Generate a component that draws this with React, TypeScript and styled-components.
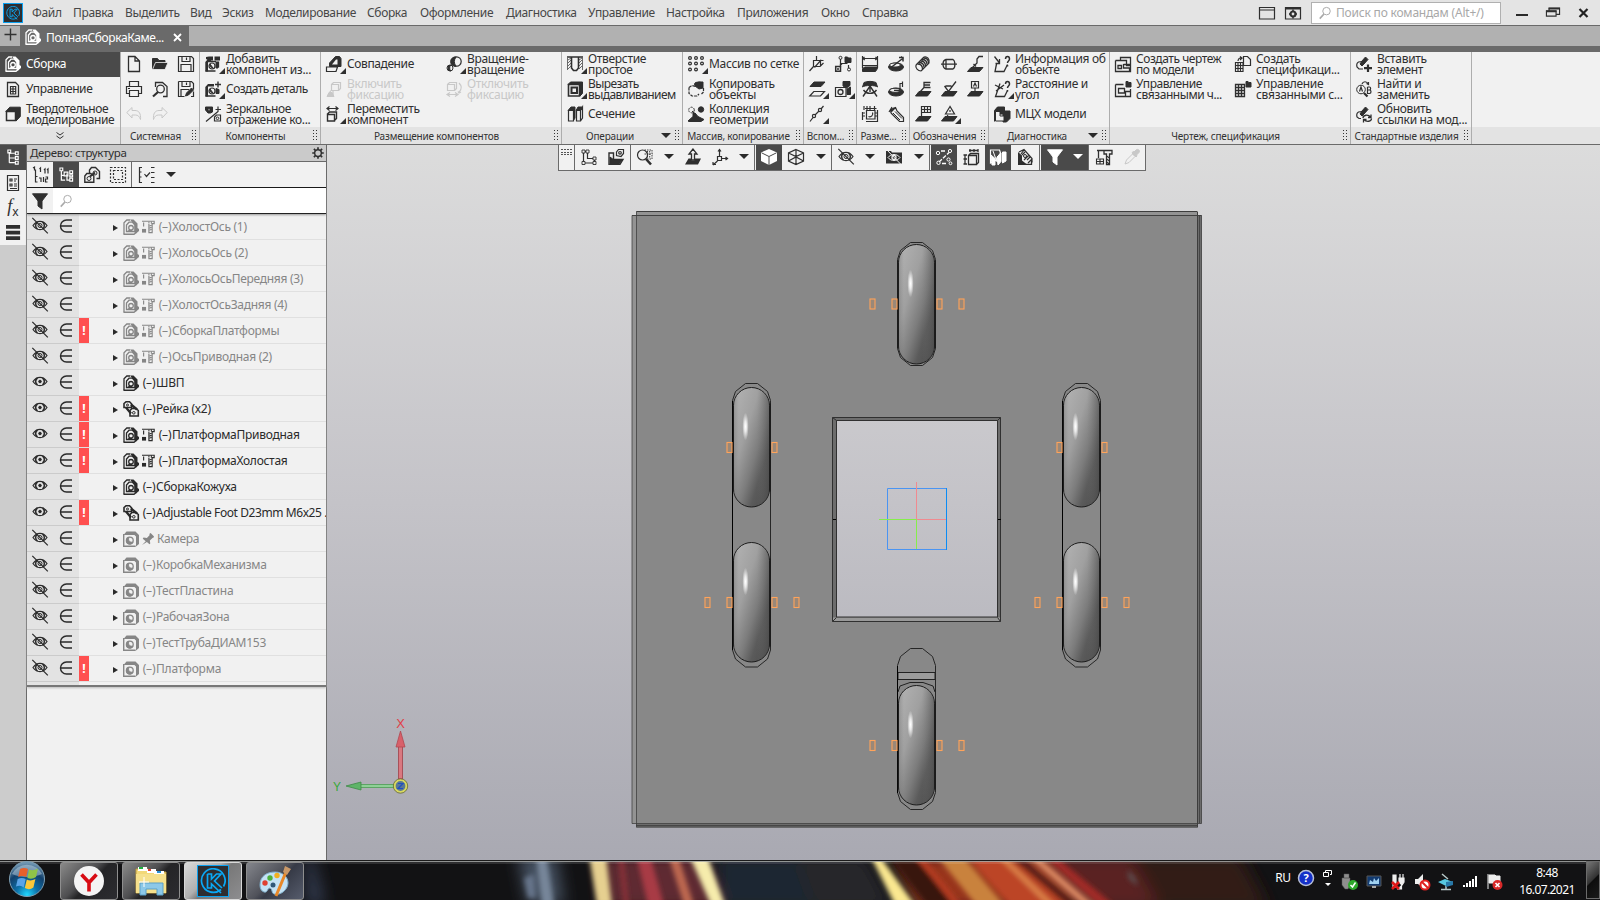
import React from "react";
import styled, { createGlobalStyle, css } from "styled-components";

const Global = createGlobalStyle`
  html, body { margin: 0; padding: 0; }
  body { width: 1600px; height: 900px; overflow: hidden; font-family: "Noto Sans", "Open Sans", sans-serif; font-size: 12px; color: #2f2f2f; }
  * { box-sizing: border-box; }
`;

/* ---------- icons: 16×16 grid ---------- */
const F = "currentColor";
const icons: Record<string, React.ReactNode> = {
  asm: <><path d="M1 15.300V3.800L3.800 1H7" strokeWidth="1.300" /><path d="M3.500 12.500V6L6 3.200h3.500L12 6v6.500z" strokeWidth="1.300" /><path d="M7 .5h3.500l4 4v4.500l1.500 1v2l-3 2.500-1.500-1V6L9 3z" fill={F} stroke="none" /><path d="M.5 15.300h10.500l2.500-2" strokeWidth="1.400" /><circle cx="8" cy="8.800" r="2.300" strokeWidth="1.300" /><path d="M5.500 11a3.500 3.500 0 0 0 3.500 .3" strokeWidth="1.800" /></>,
  sheet: <><path d="M2.500 1.500h8l3 3v11h-11z" strokeWidth="1.300" /><path d="M5 5.500h6M5 8h6M5 10.500h6M5 13h6M5.500 5v8.500M8 5v8.500M10.700 5v8.500" strokeWidth="1.200" /></>,
  solid: <><path d="M1.500 5.500h9v9h-9z" strokeWidth="1.500" /><path d="M.8 5.500l4-4.300h10.500v9.300l-4.300 4.500V5.500z" fill={F} /></>,
  file: <path d="M2.500 .5h6.500l4.500 4.500v10.500h-11z M9 .5V5h4.500" strokeWidth="1.300" />,
  folder: <><path d="M.5 13V2.500h5l1.500 2h6v2" fill={F} /><path d="M3.500 6.500H16l-3 7H.5z" fill={F} stroke="#f1f1f1" strokeWidth=".8" /></>,
  save: <><path d="M.5 .5h13l2 2v13H.5z" strokeWidth="1.200" /><path d="M4 .5v5h8v-5M8.500 1.500v2.500M3 15.500V8.500h10v7" strokeWidth="1.200" /></>,
  print: <><path d="M3.500 5V.5h9V5M3.500 12.500h-3v-7h15v7h-3M3.500 9.500h9v6h-9zM2 7.500h2" strokeWidth="1.200" /></>,
  preview: <><path d="M3.500 6V1.500h7l4.500 4v10h-4" strokeWidth="1.300" /><circle cx="8.500" cy="8" r="3.800" strokeWidth="1.300" /><path d="M6 11L1 15.500" strokeWidth="2.200" /></>,
  saveas: <><path d="M.5 .5h13l2 2v6M.5 .5v15h6M4 .5v5h8v-5M8.500 1.500v2.500M3 15V8.500h8M13 15.500h2.500v-5" strokeWidth="1.200" /><path d="M7.500 15l1-3 5-5 2 2-5 5z" fill={F} /></>,
  undo: <path d="M.8 6.500L6 1.500v3h3c4 0 6 3 5.500 9-1-3-2.500-4.500-5-4.500H6v3z" />,
  redo: <path d="M15.200 6.500L10 1.500v3H7c-4 0-6 3-5.500 9 1-3 2.500-4.500 5-4.500H10v3z" />,
  addcomp: <><path d="M.3 15.500V6L3 3h3v3H3v9.500zM1 3V1l3-.5h4v4H4zM9.500 .5H15v4H9.500z" fill={F} stroke="none" /><path d="M.5 15h10M3 5.500h8M13.500 5.500v6" strokeWidth="1.300" /><circle cx="7" cy="10" r="3" strokeWidth="1.200" /><path d="M5 8l3 4a3 3 0 0 1-3-4zM11 6h2v6h-2z" fill={F} /></>,
  newpart: <><path d="M.3 15.500V6L3 3h6v2.500H3v10z" fill={F} stroke="none" /><path d="M.5 15h10M13 .5v6M10 3.500h6" strokeWidth="1.400" /><circle cx="7" cy="10" r="3" strokeWidth="1.200" /><path d="M5 8l3 4a3 3 0 0 1-3-4zM11 7.500l3 1v4h-3z" fill={F} /></>,
  mirror: <><path d="M.5 1h7v5l-2 1H3L.5 4z" fill={F} /><path d="M3 2.800h2v2H3z" fill="#fff" /><path d="M1 15.500L13 5.500M9.500 15v-4l2-2h4v6zM13 6V.5M10.500 3.500h5.500" strokeWidth="1.200" /><circle cx="12.500" cy="12.300" r="1.300" /></>,
  coincide: <><path d="M3.500 10.500V7l6-6.500h4l1.500 2v8h-11z" fill={F} /><path d="M6 8.500l4-5h1.500v5z" fill="#f1f1f1" stroke="none" /><path d="M.5 15.500V11h11l-1.500 4.500z" fill="#f1f1f1" strokeWidth="1.200" /></>,
  rotate: <><circle cx="10.500" cy="5.500" r="4.700" strokeWidth="1.200" /><path d="M10 1a4.700 4.700 0 1 0 0 9.300 8 8 0 0 1 0-9.300zM5 9a3 3 0 1 0 0 6 4 4 0 0 1 0-6z" fill={F} /><circle cx="4" cy="12" r="3" /></>,
  fix: <><path d="M5.500 3.500h7v6h-7zM5.500 3.500l2-2h7v6l-2 2M7 9.500v3M3.500 11.500L5 9.500" strokeWidth="1.200" /><path d="M1 15.500l2-4h3l2 4zM2 13h6" fill={F} /></>,
  unfix: <><path d="M1.500 3.500h7v6h-7zM1.500 3.500l2-2h7v6l-2 2M2 13.500h9M4 11.500l-3 2 3 2M9 11.500l3 2-3 2M13 2c3 3 3 6 0 9M12 10.500l1 1.500 2-1" strokeWidth="1.200" /></>,
  move: <><path d="M1 2.500h11M3.500 .5l-2.500 2 2.500 2M9.500 .5l2.500 2-2.500 2" strokeWidth="1.200" /><path d="M1.500 8.500h7v6.500h-7zM1 8.500l2.500-2.500h7v6.500l-2.500 2.500" strokeWidth="1.400" /></>,
  hole: <><path d="M0 1h16M4.500 1.500v10.500l2 2.500h3l2-2.500v-10.500" strokeWidth="1.600" /><path d="M1 4l3-2M1 7l3-3M1 10l3-3M1 13l3-3M12 4l3-2M12 7l3-3M12 10l3-3M12 13l3-3M.5 2v12M15.500 2v12" strokeWidth=".7" /></>,
  cut: <><path d="M1.500 3.500h11v11.500h-11z" strokeWidth="1.600" /><path d="M1 3.500L3.500 1H15.500v11.500l-2.500 2.500V3.500z" fill={F} /><path d="M4.500 6.500h5.500v5.500h-5.500z" strokeWidth="2" /></>,
  section: <><path d="M1.500 4.500h5v10.500h-5zM9.500 4.500h4v10.500h-4zM13.500 15l2-3v-11l-2 3.500" strokeWidth="1.200" /><path d="M1 4.500l3-3.500h4v11L6.500 14.500V4.500zM9 4.500l2-3.500h4l-1.500 3.500z" fill={F} /></>,
  grid: <>{[2, 8, 14].flatMap((x) => [2, 7.5, 13.5].map((y) => (x === 14 && y === 13.5 ? null : <circle key={x + "-" + y} cx={x} cy={y} r="1.400" strokeWidth="1.200" />)))}</>,
  copy: <><path d="M7 3l4-2h4v6l-4 1-4-3z" fill={F} /><path d="M1 6.500l3-2 4 1M1 6.500v6l3 2.500h5l2-2M15.500 7v4l-2 2" strokeDasharray="3 1" strokeWidth="1.200" /><ellipse cx="10.500" cy="3" rx="4" ry="2" fill={F} /></>,
  collect: <><circle cx="3.500" cy="4" r="2.800" strokeDasharray="2 1" /><circle cx="13" cy="3.500" r="2.700" fill={F} /><path d="M0 15l5-4.500V7h2l3 3.500 6 3-3 2H1z" fill={F} /><path d="M4 5l3 3" /></>,
  planeaux: <><path d="M4.500 10.500V4.500h7M4.500 10.500L.5 15M4.500 10.500h6.500L14.500 7M7.500 0v5M5.500 11.500l6-7v6M14.500 4.500h-3" strokeWidth="1.200" /></>,
  treeaux: <><path d="M5.500 3v8M5.500 7.500h7M13.500 9v3" strokeWidth="1.200" /><circle cx="5.500" cy="1.800" r="1.500" /><circle cx="14" cy="13.500" r="1.500" /><path d="M10 1h2.500l1 1H16v4.500h-6z" fill={F} /><path d="M.7 10.500h4.800v4.800H.7z" strokeWidth="1.500" /><path d="M2 13h2M7 7.500l-2 2" strokeWidth="1.500" /></>,
  planes: <><path d="M1 5.500L5 1h11l-4 4.500z" fill={F} /><path d="M.8 15l4-4.500H15.500L11.500 15z" strokeWidth="1.200" /></>,
  camera: <><path d="M.5 6.500h10.500v9H.5z" strokeWidth="1.200" /><circle cx="5.500" cy="11" r="2.500" strokeWidth="1.300" /><path d="M8 .5h7v4l-3.500 2.500L8 5zM12 8l3.500-2v7.500H12z" fill={F} /></>,
  line: <><path d="M1 15.500l3-4M6 9l4-4M12 3l2.500-3" strokeWidth="1.200" /><circle cx="5" cy="10" r="1.600" strokeWidth="1.200" /><circle cx="11" cy="4" r="1.600" strokeWidth="1.200" /></>,
  dimlin: <><path d="M.5 0v12M15.500 0v12M.5 2.500h15M2.500 1L.8 2.500l2 1.500M13.500 1l1.700 1.500-2 1.500M1 9.500h14" strokeWidth="1.200" /><path d="M.5 12.500L3 11h12.500v1.500L13.500 15.500H.5z" fill={F} /></>,
  dimrad: <><ellipse cx="8" cy="11" rx="7.500" ry="4" fill={F} /><ellipse cx="7" cy="9" rx="5.500" ry="2" fill="#f1f1f1" /><path d="M3 11.500L14 3M13 .5l2.500 2.500M11 1.500h4v4" strokeWidth="1.500" /></>,
  dimang: <><path d="M2 1.500c3-1.500 9-1.500 12 0l1.500 4.500c-2-2-13-2-15 0z" fill={F} /><path d="M1 15.500L8 5l7 10.500M1.500 9c3 4.500 10 4.500 13 0M8 5v6" strokeWidth="1.400" /></>,
  dimdia: <><ellipse cx="8" cy="11" rx="7.500" ry="4" fill={F} /><ellipse cx="7" cy="9.300" rx="5.500" ry="2" fill="#f1f1f1" /><path d="M6 9.300h6V2.500h3M14.500 .5v5.500" strokeWidth="1.200" /></>,
  dimbox: <><path d="M4.500 4.500h8.500v8.500h-8.500zM.5 6v8M14.500 2.500H3M2 0v4M5 0v4M8 0v4M12.500 0v4M0 7h3M0 10h3M4 15.500h11.500V4M16 7h-3M16 10h-3M6.500 10.500a3 3 0 0 0 4-4" strokeWidth="1.200" /></>,
  dimsl: <><path d="M3.500 5.500l4-4M1 6l3-5M7.500 1.500c-5 1-6 5-3 7l7 7h4v-4L9 5z" strokeWidth="1.200" /><path d="M5 7l7 7M7 5.500l7 7" /></>,
  thread: <><path d="M1 9l8-8M6 15l8-8M9 1c3-1 6 2 5 6M1 9c-1 3 2 6 5 6" strokeWidth="1.200" /><path d="M2.500 8c3 0 5 2 5 5M4 6.500c3 0 5 2 5 5M5.500 5c3 0 5 2 5 5M7 3.500c3 0 5 2 5 5M8.500 2c3 0 5 2 5 5" strokeWidth="1.300" /></>,
  cyl: <><path d="M5 3.500h7c2 1 3 8 0 9.500H5M5 3.500c-4 1-4 8.500 0 9.500zM0 8.200h16" strokeWidth="1.300" /></>,
  lead: <><path d="M.5 15.500L4 11.500h12l-3.500 4z" fill={F} /><path d="M5 12l5-5V3L12 .5h4M6.500 8l2.500 2.500" strokeWidth="1.300" /></>,
  base1: <><path d="M.5 15L4 10.500h12L12.500 15z" fill={F} /><path d="M5 11l4-4.500V1.500h6.500M9 4h6M9 6.500h6.500" strokeWidth="1.300" /></>,
  rough: <><path d="M.5 15L4 10.500h12L12.500 15z" fill={F} /><path d="M3.500 5l4 5.500L15 .5M4.500 5h6" strokeWidth="1.300" /></>,
  baseA: <><path d="M.5 15L4 10.500h12L12.500 15z" fill={F} /><path d="M4.500 .5h7v6.500h-7zM8 7v4M6.500 5.500L8 2l1.500 3.500" strokeWidth="1.200" /></>,
  table: <><path d="M.5 15L4 10.500h12L12.500 15z" fill={F} /><path d="M6.500 .5h9v6h-9zM6.500 3.500h9M9.500 .5v6M12.500 .5v6M6.500 7v5" strokeWidth="1.200" /></>,
  tri: <><path d="M.5 15L4 10.500h12L12.500 15z" fill={F} /><path d="M9 .5L4.500 8h9zM9 4v2M7 9l-2 3" strokeWidth="1.200" /></>,
  info: <><path d="M.5 .5l5 6.500M5.500 3v4.500H1.500M2.500 8L1 15.500h9l3.500-7" strokeWidth="1.300" /><path d="M11.500 3c0-3.500 4-3.500 4 0 0 2-2 2-2 4M13.500 9v1.500" strokeWidth="1.500" /></>,
  dist: <><path d="M1 4l8 4M6 2.500L1.500 15.500h9l3-6M2 10l8-6" strokeWidth="1.300" /><path d="M11.500 3c0-3.500 4-3.500 4 0 0 2-2 2-2 4M13.500 9v1.500" strokeWidth="1.500" /></>,
  mass: <><path d="M.5 15.500V4.500l3-3.500h7v4h5.500v7.500l-3.500 3.500H9v-8H4" fill={F} /><path d="M1.500 5.500h4.500v4.500h4v5h-8.500z" fill="#f1f1f1" /></>,
  drawing: <><path d="M.5 4.500h6M.5 4.500v11h15v-8M5.500 4V1.500h10v8h-4v-5h-6M8.500 8.500h7M8.500 8v4h6v3M3 9.500h3.500v3H3z" strokeWidth="1.300" /></>,
  managedr: <><path d="M.5 3.500h8M.5 3.500v12h15V8M3.500 7.500h6v4.500h-6zM10.500 15v-4.500h5" strokeWidth="1.300" /><path d="M11 .5h2l1 1h2v4.500h-5z" fill={F} /></>,
  spec: <><path d="M.5 6.500h7.500v9h-7.500zM.5 9.500h7.500M.5 12.500h7.500M3 6.500v9M5.500 6.500v9M8.500 9.500V.5h4l3 3V9.500h-7M3 5c0-4 4-3 4-3M5 .5l2 1.500-2 2" strokeWidth="1.200" /></>,
  managesp: <><path d="M.5 3.500h9v12h-9zM.5 6.500h9M.5 9.500h9M.5 12.500h9M3.500 3.500v12M6.500 3.500v12" strokeWidth="1.300" /><path d="M11 .5h2l1 1h2v4.500h-5z" fill={F} /></>,
  stdadd: <><path d="M6 5.500L2.500 6C.5 7 .5 9 1 11l2 2h4" strokeWidth="1.200" /><path d="M5.500 5.500L9.500 1l2.500 2.500-4 4.500zM4 8l2-3 3 2-3 3z" fill={F} /><path d="M12 8.500v7.500M8 12.200h8" strokeWidth="2.200" /></>,
  stdfind: <><circle cx="5" cy="8.500" r="4.300" /><path d="M8 12l3.500 3.500" strokeWidth="2.200" /><path d="M3.500 10.500L5 6l1.500 4.500M11.500 6v6.500h2c2 0 2-3.500 0-3.500h-2M13.500 9c1.500 0 1.500-3 0-3h-2M6 3c1-3 5-3 6 0M10.500 2.500l2 1V1" strokeWidth="1.200" /></>,
  stdref: <><path d="M6 5.500L2.500 6C.5 7 .5 9 1 11l2 1.500h2" strokeWidth="1.200" /><path d="M5.500 5.500L9.500 1l2.500 2.500-4 4.500zM4 8l2-3 3 2-3 3z" fill={F} /><path d="M7 12c0-3 5-4 7.500-1M15.500 12.500c0 3-5 4-7.500 1M15 8.500v3h-3M7.500 16.500v-3h3" strokeWidth="1.300" /></>,
  treeA: <><path d="M3.500 2v11.500M3.500 3.500h6M3.500 8.500h6M3.500 13.500h6" strokeWidth="1.200" /><path d="M2 0h3v3H2zM10 2h3v3h-3zM10 7h3v3h-3zM10 12h3v3h-3z" strokeWidth="1.200" /></>,
  paramlist: <><path d="M2.500 .5h11v15h-11zM5 4h2v2H5zM5 9h2v2H5zM9 4h3M9 6h2M9 9h3M9 11h3M5 13.500h7" strokeWidth="1.200" /></>,
  bars: <path d="M0 2h15M0 8h15M0 14h15" strokeWidth="4" />,
  numtree: <><path d="M3.500 2.500V15h2M3.500 9.500h2" strokeWidth="1.200" /><path d="M1 1l1.500-1v3.500M7.500 2l1-1v4M12 3l1-1v4.500M15 3l1-1v4.500M7 11h2v4M11.500 10V15M13.500 10h2v2h-2v3h2" strokeWidth="1.200" /></>,
  typetree: <><path d="M2.500 4v10h4M2.500 9h3M8.500 7v7h3" strokeWidth="1.300" /><path d="M1 1h3v3H1zM5.500 5.500h4v4h-4zM11.500 4h3v3h-3zM11.500 8.500h3v2h-3zM11.500 12h3v3h-3z" strokeWidth="1.200" /></>,
  twodocs: <><path d="M5.500 7V3l2-2.500h4l4 4v7h-3M.8 15.300V9l2-2.500h4l3 2.500v6.300z" strokeWidth="1.400" /><circle cx="5" cy="11.500" r="2" /><path d="M6 9.500l5-4" strokeWidth="2" /><circle cx="11" cy="6" r="2" /></>,
  dashed: <path d="M.5 .5h15v15H.5zM3.500 3.500h9v9h-9z" strokeDasharray="2 1.500" strokeWidth="1.200" />,
  checktree: <><path d="M3 .5H.5v15H3M.5 5h2M.5 10h2M5.500 7l2 2.500L11 5.500M12 .5h3.500M12 5.500h3.500M12 10.500h3.500M12 15.500h3.500" strokeWidth="1.200" /></>,
  funnel: <path d="M.5 .8h15L10 8v8l-4-3V8z" fill={F} />,
  gear: <><circle cx="8" cy="8" r="4.500" strokeWidth="2" /><path d="M8 .3v3M8 12.700v3M.3 8h3M12.700 8h3M2.500 2.500l2 2M11.500 11.500l2 2M13.500 2.500l-2 2M4.500 11.500l-2 2" strokeWidth="2.200" /></>,
  search: <><circle cx="10" cy="5.500" r="5" strokeWidth="1.300" /><path d="M6.500 9.500L1 15.500" strokeWidth="2" /></>,
  eye: <><path d="M1 7.500c4-5.500 10-5.500 14 0-4 5.500-10 5.500-14 0z" strokeWidth="1.200" /><path d="M5.500 4a4.200 4.200 0 0 0 0 7M10.500 4a4.200 4.200 0 0 1 0 7" strokeWidth="1.600" /><circle cx="8" cy="7.500" r="1.300" fill={F} /></>,
  eyeoff: <><path d="M1 7.500c4-5.500 10-5.500 14 0-4 5.500-10 5.500-14 0z" strokeWidth="1.200" /><path d="M5.500 4a4.200 4.200 0 0 0 0 7M10.500 4a4.200 4.200 0 0 1 0 7" strokeWidth="1.500" /><circle cx="8" cy="7.500" r="2" /><path d="M.3 -.2l15.500 15.500" strokeWidth="1.200" /></>,
  elem: <path d="M14 2H8.500a6 6 0 0 0 0 12H14M3 8H14" strokeWidth="1.400" />,
  multi: <><path d="M1 6V2.500L3 .8h3.500l2 2v3.700H1zM7 15V9.500l2-2h4l2.300 2V15z" strokeWidth="1.600" /><path d="M3 6.500l5 6M8 3.500l6 5" strokeWidth="2.300" /><circle cx="4.500" cy="4" r="1" /><circle cx="10.800" cy="11.800" r="1.300" /></>,
  part: <><path d="M.7 3v12.300h12" strokeWidth="1.400" /><path d="M.5 4L3.500 .5h9L16 4v9l-3 2.500V5.500L11.500 4z" fill={F} stroke="none" /><circle cx="6.800" cy="9.500" r="3.400" strokeWidth="1.300" /><path d="M6 6.500c-1.500 3 1 5.500 4 4.500a3.400 3.400 0 1 1-4-4.500z" fill={F} /></>,
  std: <><path d="M0 1.500h15v3h-2.500v11h-4V4.500M2 3v5" strokeWidth="1.400" /><path d="M9 7.500l3-1M9 10l3-1M9 12.500l3-1M8.500 2v2M11.500 1.500v3" strokeWidth="1.300" /><path d="M0 11h5v4.500H0z" fill={F} stroke="none" /></>,
  fixpin: <path d="M16 4.500l-4.500-4.500-1.500 1v2L6.500 6.500 2 6l-1 1.500 4 3.500-5 5 6.500-4L10 15l1-1-.5-4L14 6.500l1.500-.5z" fill={F} stroke="none" />,
  sketch: <><path d="M2.500 2.500v11.500h11v-4.500h-7v-7z" strokeWidth="1.200" /><path d="M1 1h3v3H1zM5 1h3v3H5zM12 8h3v3h-3zM1 12.500h3v3H1zM12 12.500h3v3h-3z" fill="#f1f1f1" strokeWidth=".9" /></>,
  sketch3d: <><path d="M1 15.300V4h4.500v6.500h9.500L12 15.300z" strokeWidth="1.400" /><path d="M2 14.500V8l4 3h8l-2.500 3.500z" fill={F} /><path d="M8.500 6.500v-3.500l2-2.500h5v4l-2.500 3z" strokeWidth="1.200" /><circle cx="12" cy="3.800" r="1.300" strokeWidth="1.200" /></>,
  zoomarea: <><circle cx="5.500" cy="6" r="5" strokeWidth="1.200" /><path d="M9 10l5 5.500" strokeWidth="2.600" /><path d="M7.500 1h7.500v9h-5M10.500 2v7M12.700 2v7M7.500 5h8" strokeDasharray="1.500 1" strokeWidth=".9" /></>,
  normal: <><path d="M8 0L4 5h2.500v6h3V5H12z" fill="#f1f1f1" strokeWidth="1.300" /><path d="M0 15.500L3.500 9.500h3v2h3v-2H16L13 15.500z" fill={F} stroke="none" /></>,
  axes: <><path d="M5.500 7.500h4v4h-4zM7.500 7V0M10 9.500h5.500M5.500 12L1 16M6 2.500L7.500 .5 9 2.500M13.500 8l2 1.500-2 1.500M1 13v2.500h3" strokeWidth="1.200" /></>,
  shaded: <><path d="M8 0l8 3.500v8.500l-8 4-8-4V3.500z" fill="#fff" stroke="none" /><path d="M.5 3.800L8 7.500l7.500-3.700M8 7.500V16" stroke="#4a4a4a" /></>,
  wire: <><path d="M8 .5l7.500 3.500v8L8 15.500.5 12V4zM.5 4l7.500 3.500L15.500 4M8 7.500v8M.5 12l7.500-4 7.500 4M8 .5v7" strokeWidth="1.200" /></>,
  eyebox: <><path d="M0 2h5l1 1.500h10V14.500H0z" fill={F} stroke="none" /><path d="M2 8.500c3-4 9-4 12 0-3 4-9 4-12 0z" stroke="#f1f1f1" fill="none" /><circle cx="8" cy="8.500" r="2" stroke="#f1f1f1" strokeWidth="1.300" /><path d="M0 0l15 15.500" stroke="#f1f1f1" strokeWidth="1" /></>,
  snaps: <><path d="M3 13L13 3.500M5 2h5M6 14.500h5" strokeWidth="1.300" strokeDasharray="4 1.500" /><circle cx="2" cy="4" r="1.700" /><circle cx="14" cy="2" r="1.600" /><circle cx="12.500" cy="10.500" r="1.600" /><circle cx="14.500" cy="14.300" r="1.400" /><circle cx="2.500" cy="13.800" r="1.700" /></>,
  dims3: <><path d="M5.500 6.500h8v9h-8zM5.500 6.500l2-2h8v9l-2 2M6 1.500h9.500M7 0v3M11 0v3M15 0v3M2 6v9M.5 6H4M.5 10H4M.5 15H4" strokeWidth="1.300" /></>,
  cubes: <><path d="M.5 1h9l1 3-5 7.500-5 2.500z" strokeWidth="1.200" /><path d="M1 6l4 3.500v6.500H2zM7 8l4-4v8.500L8 16zM12.500 3H16v9l-3.500 2z" fill={F} /><path d="M3 2l4 11" /></>,
  section3: <><path d="M1 15.500V3l4 3.500v5l5 4z" fill={F} stroke="none" /><path d="M1 15.300h13.500V12" strokeWidth="1.300" /><path d="M2 3l5-2.500 8 9v4M5 6l3-3M7 11l5-5M11 14l4-4M10 11l3-3M7 1L4 5" strokeWidth="1.200" /><circle cx="8" cy="7" r="1.500" /></>,
  crane: <><path d="M1 1.500h15V5h-2.500v10.500h-3V5H8V1.500M2.500 2v7" strokeWidth="1.300" /><path d="M10.500 7l3 2M10.500 10l3 2M10.500 13l3 2M.5 10h7v5h-7zM.5 12.500h7M4 10v5" strokeWidth="1.100" /></>,
  picker: <><path d="M1 15l1.500-4 6-6 2.500 2.500-6 6z" /><path d="M8 4l4 4 1-1-.5-1L15 3.500c1.500-2-1-4-2.700-2.700L10 3l-1-.5z" fill={F} /></>,
  win: <path d="M.5 2.500h15v11.500H.5zM.5 5h15" strokeWidth="1.200" />,
  wingear: <><path d="M.5 2.500h15v11.500H.5z" strokeWidth="1.200" /><path d="M0 2h16v2.500H0z" fill={F} stroke="none" /><circle cx="8" cy="9" r="2.500" strokeWidth="2.200" /><path d="M8 4.500v2M8 11.500v2M4 9h2M10 9h2" strokeWidth="1.500" /></>,
  restore: <><path d="M3.500 5V2.500h12v7H12M.5 5.500h11v6H.5z" strokeWidth="1.300" /><path d="M0 6h12M3 3h13" strokeWidth="2" /></>,
};

const Svg = styled.svg<{ $size: number; $color?: string }>`
  width: ${(p) => p.$size}px;
  height: ${(p) => p.$size}px;
  flex: none;
  display: block;
  overflow: visible;
  color: ${(p) => p.$color || "inherit"};
`;
const Icon = ({ name, size = 16, color }: { name: string; size?: number; color?: string }) => (
  <Svg $size={size} $color={color} viewBox="0 0 16 16" fill="none" stroke="currentColor" strokeWidth="1">
    {icons[name]}
  </Svg>
);

/* ---------- menu bar ---------- */
const Window = styled.div`
  width: 1600px;
  height: 900px;
  display: flex;
  flex-direction: column;
  background: #f1f1f1;
`;
const MenuBar = styled.header`
  height: 26px;
  padding-left: 3px;
  display: flex;
  align-items: center;
  background: #e4e4e4;
  border-bottom: 1px solid #6a6a6a;
  flex: none;
`;
const AppLogo = styled.div<{ $size: number }>`
  width: ${(p) => p.$size}px;
  height: ${(p) => p.$size}px;
  flex: none;
  background: #2d2d30;
  border: 1px solid #0aa0f0;
  display: flex;
  align-items: center;
  justify-content: center;
`;
const Logo = ({ size }: { size: number }) => (
  <AppLogo $size={size}>
    <svg width={size - 6} height={size - 6} viewBox="0 0 26 26" fill="none" stroke="#0aa8f5" strokeWidth="1.700">
      <path d="M21 21.500A11.800 11.800 0 1 1 23.500 18.500" />
      <path d="M7.500 6v14h4v-4l9.500 9M7.500 6h4v5l5-5H21l-6.500 7 7.500 7" />
    </svg>
  </AppLogo>
);
const MenuItems = styled.nav`
  display: flex;
  margin-left: 9px;
  flex: 1;
`;
const MenuItem = styled.span<{ $w: number }>`
  width: ${(p) => p.$w}px;
  white-space: nowrap;
  color: #474747;
  letter-spacing: -0.35px;
`;
const MenuTools = styled.div`
  display: flex;
  align-items: center;
  gap: 10px;
  margin-right: 10px;
`;
const CommandSearch = styled.div`
  width: 190px;
  height: 22px;
  margin-right: 15px;
  display: flex;
  align-items: center;
  gap: 5px;
  padding-left: 7px;
  background: #fff;
  border: 1px solid #b0b0b0;
  color: #a8a8a8;
  letter-spacing: -0.2px;
  white-space: nowrap;
`;
const WinControls = styled.div`
  display: flex;
  align-items: center;
  width: 84px;
  gap: 18px;
`;
const MinBar = styled.i`
  width: 12px;
  height: 2px;
  margin-top: 4px;
  background: #2a2a2a;
`;

/* ---------- document tabs ---------- */
const TabStrip = styled.div`
  height: 26px;
  display: flex;
  background: #b1b1b1;
  border-bottom: 6px solid #6a6a6a;
  flex: none;
`;
const NewTab = styled.div`
  width: 20px;
  padding-bottom: 3px;
  display: flex;
  align-items: center;
  justify-content: center;
`;
const DocTab = styled.div`
  width: 169px;
  padding: 2px 7px 0 5px;
  display: flex;
  align-items: center;
  gap: 5px;
  background: #6a6a6a;
  color: #fff;
  white-space: nowrap;
  letter-spacing: -0.4px;
`;
const TabTitle = styled.span`
  flex: 1;
`;

/* ---------- ribbon ---------- */
const Ribbon = styled.div`
  height: 93px;
  display: flex;
  border-bottom: 1px solid #6a6a6a;
  background: linear-gradient(#f1f1f1 75px, #e3e3e3 75px);
  flex: none;
`;
const Group = styled.section<{ $w: number }>`
  width: ${(p) => p.$w + 1}px;
  border-right: 1px solid #adadad;
  display: flex;
  flex-direction: column;
  flex: none;
`;
const Columns = styled.div`
  height: 75px;
  display: flex;
`;
const Column = styled.div<{ $w: number }>`
  width: ${(p) => p.$w}px;
  display: flex;
  flex-direction: column;
`;
const Command = styled.div<{ $active?: boolean; $disabled?: boolean }>`
  height: 25px;
  display: flex;
  align-items: center;
  background: ${(p) => (p.$active ? "#4a4a4a" : "transparent")};
  color: ${(p) => (p.$active ? "#fff" : p.$disabled ? "#c8c8c8" : "#2f2f2f")};
`;
const IconSlot = styled.span<{ $more?: boolean }>`
  width: 26px;
  height: 25px;
  padding-bottom: 1px;
  display: flex;
  align-items: center;
  justify-content: center;
  flex: none;
  position: relative;
  ${(p) =>
    p.$more &&
    css`
      &::after {
        content: "";
        position: absolute;
        right: 1px;
        bottom: 3px;
        border-left: 6px solid transparent;
        border-bottom: 6px solid #2f2f2f;
        filter: drop-shadow(-1px 0 0 #f1f1f1);
      }
    `}
`;
const Caption = styled.span<{ $tight?: number }>`
  margin-top: -2px;
  line-height: 11px;
  white-space: pre;
  letter-spacing: ${(p) => p.$tight ?? -0.32}px;
`;
const GroupFooter = styled.div`
  height: 17px;
  display: flex;
  align-items: center;
  font-size: 10px;
  color: #333;
`;
const GroupTitle = styled.span`
  flex: 1;
  display: flex;
  justify-content: center;
  white-space: nowrap;
  letter-spacing: -0.18px;
`;
const Grip = styled.span`
  width: 4px;
  height: 10px;
  margin-right: 3px;
  margin-left: 2px;
  margin-bottom: 1px;
  background: repeating-linear-gradient(90deg, transparent 0 1px, #e3e3e3 1px 3px), repeating-linear-gradient(#333 0 1px, #e3e3e3 1px 3px);
`;
const Caret = styled.i<{ $w?: number; $light?: boolean }>`
  width: ${(p) => p.$w || 20}px;
  display: flex;
  justify-content: center;
  flex: none;
  &::after {
    content: "";
    border: 5px solid transparent;
    border-top: 5px solid ${(p) => (p.$light ? "#fff" : "#2a2a2a")};
    border-bottom: 0;
  }
`;

type Cmd = { i: string; t?: string; more?: boolean; off?: boolean; on?: boolean; tight?: number };
type Grp = { w: number; title?: string; caret?: boolean; cols: { w: number; items: Cmd[] }[] };
const groups: Grp[] = [
  { w: 120, cols: [{ w: 120, items: [{ i: "asm", t: "Сборка", on: true }, { i: "sheet", t: "Управление", tight: -0.4 }, { i: "solid", t: "Твердотельное\nмоделирование", tight: -0.45 }] }] },
  {
    w: 78, title: "Системная", cols: [
      { w: 26, items: [{ i: "file" }, { i: "print" }, { i: "undo", off: true }] },
      { w: 26, items: [{ i: "folder" }, { i: "preview" }, { i: "redo", off: true }] },
      { w: 26, items: [{ i: "save" }, { i: "saveas" }] },
    ],
  },
  { w: 120, title: "Компоненты", cols: [{ w: 120, items: [{ i: "addcomp", t: "Добавить\nкомпонент из...", more: true }, { i: "newpart", t: "Создать деталь", more: true, tight: -0.55 }, { i: "mirror", t: "Зеркальное\nотражение ко..." }] }] },
  {
    w: 240, title: "Размещение компонентов", cols: [
      { w: 120, items: [{ i: "coincide", t: "Совпадение", more: true, tight: -0.4 }, { i: "fix", t: "Включить\nфиксацию", off: true }, { i: "move", t: "Переместить\nкомпонент", more: true }] },
      { w: 120, items: [{ i: "rotate", t: "Вращение-\nвращение", more: true }, { i: "unfix", t: "Отключить\nфиксацию", off: true }] },
    ],
  },
  { w: 120, title: "Операции", caret: true, cols: [{ w: 120, items: [{ i: "hole", t: "Отверстие\nпростое", more: true }, { i: "cut", t: "Вырезать\nвыдавливанием", more: true, tight: -0.58 }, { i: "section", t: "Сечение" }] }] },
  { w: 120, title: "Массив, копирование", cols: [{ w: 120, items: [{ i: "grid", t: "Массив по сетке", more: true }, { i: "copy", t: "Копировать\nобъекты" }, { i: "collect", t: "Коллекция\nгеометрии" }] }] },
  { w: 52, title: "Вспом...", cols: [{ w: 26, items: [{ i: "planeaux" }, { i: "planes", more: true }, { i: "line", more: true }] }, { w: 26, items: [{ i: "treeaux" }, { i: "camera", more: true }] }] },
  { w: 52, title: "Разме...", cols: [{ w: 26, items: [{ i: "dimlin" }, { i: "dimang" }, { i: "dimbox" }] }, { w: 26, items: [{ i: "dimrad" }, { i: "dimdia" }, { i: "dimsl" }] }] },
  { w: 78, title: "Обозначения", cols: [{ w: 26, items: [{ i: "thread" }, { i: "base1" }, { i: "table" }] }, { w: 26, items: [{ i: "cyl" }, { i: "rough" }, { i: "tri", more: true }] }, { w: 26, items: [{ i: "lead" }, { i: "baseA" }] }] },
  { w: 120, title: "Диагностика", caret: true, cols: [{ w: 120, items: [{ i: "info", t: "Информация об\nобъекте" }, { i: "dist", t: "Расстояние и\nугол", more: true }, { i: "mass", t: "МЦХ модели" }] }] },
  {
    w: 240, title: "Чертеж, спецификация", cols: [
      { w: 120, items: [{ i: "drawing", t: "Создать чертеж\nпо модели", tight: -0.45 }, { i: "managedr", t: "Управление\nсвязанными ч...", tight: -0.45 }] },
      { w: 120, items: [{ i: "spec", t: "Создать\nспецификаци..." }, { i: "managesp", t: "Управление\nсвязанными с..." }] },
    ],
  },
  { w: 120, title: "Стандартные изделия", cols: [{ w: 120, items: [{ i: "stdadd", t: "Вставить\nэлемент" }, { i: "stdfind", t: "Найти и\nзаменить" }, { i: "stdref", t: "Обновить\nссылки на мод..." }] }] },
];

/* ---------- work area ---------- */
const Work = styled.main`
  height: 715px;
  display: flex;
  flex: none;
`;
const SideStrip = styled.aside`
  width: 26px;
  background: #cccccc;
  flex: none;
`;
const SideButton = styled.div<{ $on?: boolean }>`
  height: 25px;
  display: flex;
  align-items: center;
  justify-content: center;
  background: ${(p) => (p.$on ? "#4a4a4a" : "#f1f1f1")};
  color: ${(p) => (p.$on ? "#fff" : "#2f2f2f")};
`;
const Fx = styled.span`
  font: italic 18px "Liberation Serif", serif;
  sub { font: 12px "Noto Sans", sans-serif; vertical-align: -4px; }
`;
const TreePanel = styled.div`
  width: 301px;
  border: solid #6a6a6a;
  border-width: 0 1px;
  background: #f1f1f1;
  flex: none;
`;
const PanelTitle = styled.div`
  height: 17px;
  padding: 0 2px 0 3px;
  display: flex;
  align-items: center;
  justify-content: space-between;
  background: #cacaca;
  border-bottom: 1px solid #6a6a6a;
  font-size: 11.5px;
  line-height: 16px;
  letter-spacing: -0.3px;
`;
const PanelTools = styled.div`
  height: 26px;
  display: flex;
  align-items: center;
  border-bottom: 1px solid #111;
`;
const PanelTool = styled.span<{ $on?: boolean; $line?: boolean }>`
  width: ${(p) => (p.$line ? 30 : 26)}px;
  height: 25px;
  display: flex;
  align-items: center;
  justify-content: center;
  background: ${(p) => (p.$on ? "#4a4a4a" : "transparent")};
  color: ${(p) => (p.$on ? "#fff" : "#2f2f2f")};
  border-left: ${(p) => (p.$line ? "1px solid #6a6a6a" : "0")};
`;
const FilterRow = styled.div`
  height: 26px;
  display: flex;
  align-items: center;
  background: linear-gradient(90deg, #f1f1f1 26px, #fff 26px);
  border-bottom: 1px solid #222;
  box-shadow: 0 1px 2px #9a9a9a;
  position: relative;
`;
const TreeList = styled.div`
  height: 473px;
  overflow: hidden;
  display: grid;
  grid-template-columns: 1fr 1px;
  border-bottom: 2px solid #777;
  box-shadow: 0 1px 2px #bbb;
  background: linear-gradient(90deg, #e3e3e3 52px, #f1f1f1 52px);
`;
const Scroll = styled.div`
  background: #fff;
  &::before {
    content: "";
    display: block;
    width: 1px;
    height: 160px;
    margin-top: 62px;
    background: #333;
  }
`;
const Row = styled.div<{ $hidden?: boolean }>`
  height: 26px;
  display: flex;
  align-items: center;
  border-bottom: 1px solid #e0e0e0;
  color: ${(p) => (p.$hidden ? "#868686" : "#2a2a2a")};
  white-space: nowrap;
`;
const RowFlags = styled.span`
  width: 52px;
  height: 26px;
  padding-bottom: 1px;
  display: flex;
  align-items: center;
  justify-content: space-around;
  border-bottom: 1px solid #cbcbcb;
  color: #2a2a2a;
`;
const Alert = styled.span<{ $on?: boolean }>`
  width: 10px;
  height: 25px;
  display: flex;
  align-items: center;
  justify-content: center;
  font-weight: 700;
  color: #fff;
  background: ${(p) => (p.$on ? "#ff5050" : "transparent")};
`;
const Expander = styled.i`
  width: 0;
  margin: 2px 5px 0 24px;
  border: 3px solid transparent;
  border-left: 5px solid #2a2a2a;
  border-right: 0;
`;
const RowIcons = styled.span`
  display: flex;
  align-items: center;
  gap: 3px;
  margin-right: 3px;
`;
const Minus = styled.span`
  width: 14px;
  display: flex;
  justify-content: center;
  letter-spacing: -0.2px;
`;
const RowText = styled.span<{ $tight?: number }>`
  letter-spacing: ${(p) => p.$tight ?? -0.28}px;
`;

type Node = { t: string; icon: "asm" | "multi" | "part"; hidden?: boolean; alert?: boolean; std?: boolean; pin?: boolean; tight?: number };
const nodes: Node[] = [
  { t: "ХолостОсь (1)", icon: "asm", hidden: true, std: true },
  { t: "ХолосьОсь (2)", icon: "asm", hidden: true, std: true },
  { t: "ХолосьОсьПередняя (3)", icon: "asm", hidden: true, std: true },
  { t: "ХолостОсьЗадняя (4)", icon: "asm", hidden: true, std: true },
  { t: "СборкаПлатформы", icon: "asm", hidden: true, std: true, alert: true },
  { t: "ОсьПриводная (2)", icon: "asm", hidden: true, std: true },
  { t: "ШВП", icon: "asm" },
  { t: "Рейка (x2)", icon: "multi", alert: true },
  { t: "ПлатформаПриводная", icon: "asm", std: true, alert: true },
  { t: "ПлатформаХолостая", icon: "asm", std: true, alert: true },
  { t: "СборкаКожуха", icon: "asm" },
  { t: "Adjustable Foot D23mm M6x25 .", icon: "multi", alert: true, tight: -0.42 },
  { t: "Камера", icon: "part", hidden: true, pin: true },
  { t: "КоробкаМеханизма", icon: "part", hidden: true },
  { t: "ТестПластина", icon: "part", hidden: true, tight: -0.2 },
  { t: "РабочаяЗона", icon: "part", hidden: true },
  { t: "ТестТрубаДИАМ153", icon: "part", hidden: true },
  { t: "Платформа", icon: "part", hidden: true, alert: true, tight: -0.2 },
];

/* ---------- viewport ---------- */
const Viewport = styled.div`
  flex: 1;
  position: relative;
  background: linear-gradient(#dcdcdc, #c4c3c8 50%, #a9a9b2);
`;
const Scene = styled.svg`
  display: block;
  width: 1273px;
  height: 715px;
`;
const ViewBar = styled.div`
  position: absolute;
  left: 231px;
  top: 0;
  height: 26px;
  display: flex;
  background: #f1f1f1;
  border: 1px solid #6a6a6a;
  border-top: 0;
`;
const ViewCell = styled.span<{ $w: number; $on?: boolean; $off?: boolean }>`
  width: ${(p) => p.$w}px;
  height: 25px;
  padding-bottom: 2px;
  display: flex;
  align-items: center;
  justify-content: center;
  background: ${(p) => (p.$on ? "#4a4a4a" : "transparent")};
  color: ${(p) => (p.$on ? "#fff" : p.$off ? "#c8c8c8" : "#2f2f2f")};
`;
const ViewSep = styled.i<{ $gap?: number }>`
  width: 1px;
  margin-right: ${(p) => p.$gap || 0}px;
  background: #6a6a6a;
`;
const BarGrip = styled.i`
  width: 11px;
  height: 6px;
  margin: 4px 2px 0;
  background: repeating-linear-gradient(90deg, transparent 0 2px, #f1f1f1 2px 3px), repeating-linear-gradient(#555 0 1px, #f1f1f1 1px 2.500px);
`;

const Wheel = ({ cx, top }: { cx: number; top: number }) => (
  <g>
    <rect x={cx - 18} y={top} width="36" height="119.500" rx="18" fill="url(#wheel)" stroke="#1c1c1c" />
    <rect x={cx - 18} y={top} width="36" height="119.500" rx="18" fill="url(#edge)" />
    <path d={`M${cx - 18.500} ${top + 16}v88M${cx + 18.500} ${top + 16}v88`} stroke="#111" />
    <ellipse cx={cx - 6} cy={top + 39} rx="3.200" ry="14" fill="url(#spot)" />
  </g>
);
const slot = (cx: number, t: number, b: number) =>
  `M${cx - 19} ${t + 17}l3-9 10-8h12l10 8 3 9V${b - 17}l-3 9-10 8h-12l-10-8-3-9z`;
const Bolts = ({ cx, y, four }: { cx: number; y: number; four?: boolean }) => (
  <g fill="#9a8878" stroke="#ffa35a" strokeWidth="1.100">
    {(four ? [-47, -25, 20, 42] : [-25, 20]).map((d) => (
      <rect key={d} x={cx + d} y={y} width="5" height="10" />
    ))}
  </g>
);

const Model = () => (
  <Scene viewBox="327 145 1273 715">
    <defs>
      <linearGradient id="wheel" x1="0.2" y1="0.05" x2="0.95" y2="0.85">
        <stop offset="0" stopColor="#adadad" />
        <stop offset=".3" stopColor="#a0a0a0" />
        <stop offset=".6" stopColor="#7c7c7c" />
        <stop offset=".8" stopColor="#5b5b5b" />
        <stop offset="1" stopColor="#505050" />
      </linearGradient>
      <linearGradient id="edge">
        <stop offset="0" stopColor="#666" stopOpacity=".4" />
        <stop offset=".15" stopColor="#777" stopOpacity="0" />
        <stop offset=".65" stopColor="#777" stopOpacity="0" />
        <stop offset="1" stopColor="#4a4a4a" stopOpacity=".5" />
      </linearGradient>
      <radialGradient id="spot">
        <stop offset="0" stopColor="#fff" />
        <stop offset=".35" stopColor="#fff" stopOpacity=".8" />
        <stop offset="1" stopColor="#fff" stopOpacity="0" />
      </radialGradient>
    </defs>
    <path d="M636 211.500h561v4h4.500v608h-4.500v4H636v-4h-4V215.500h4zM836 420.500v197h161.500v-197z" fill="#888" fillRule="evenodd" />
    <path d="M632 215.500h4v608h-4zM636 211.500h561v4H636z" fill="#939393" />
    <path d="M1197.500 215.500h4v608h-4zM636 823.500h561v4H636z" fill="#6c6c6c" />
    <g fill="none" stroke="#3d3d3d">
      <path d="M636.500 211.500h560.500M1197.500 211.500v616" />
      <path d="M632 215.500h569.500v608H632zM636.500 211.500v615.500H1197" strokeOpacity=".75" />
      <path d="M632 215.500h569.500M1199.500 216v607M636 825.500h561" strokeOpacity=".8" />
    </g>
    <path d="M832.500 417.500h168v204h-168zM836.500 420.500v196.500h161V420.500z" fill="#6d6d6d" fillRule="evenodd" />
    <path d="M833 617.500h167v4H833z" fill="#999" />
    <path d="M832.500 417.500h168v204h-168zM836.500 420.500h161v196.500h-161zM832.500 417.500l4 3M1000.500 417.500l-3 3M832.500 621.500l4-4M1000.500 621.500l-3-4" fill="none" stroke="#303030" />
    <path d="M833 519.500h3M998 519.500h3" stroke="#000" />
    <g fill="#888" stroke="#262626" strokeWidth="1">
      <path d={slot(916.5, 242.5, 365.5)} />
      <path d={slot(751.5, 383.500, 667)} />
      <path d={slot(1081.5, 383.500, 667)} />
      <path d={slot(916.5, 648.500, 809.500)} />
    </g>
    <path d="M898 672.500h37v7h-37z" fill="#9c9c9c" stroke="#222" />
    <path d="M898 692l2-6 10-3.500h13l10 3.500 2 6" fill="none" stroke="#222" />
    <path d="M732.500 401v249M1062.500 401v249M897.500 666v127" stroke="#000" />
    <Wheel cx={916.5} top={244.5} />
    <Wheel cx={751.5} top={387.5} />
    <Wheel cx={751.5} top={542.5} />
    <Wheel cx={1081.5} top={387.5} />
    <Wheel cx={1081.5} top={542.5} />
    <Wheel cx={916.5} top={685.5} />
    <Bolts cx={917} y={299} four />
    <Bolts cx={752} y={442.500} />
    <Bolts cx={1082} y={442.500} />
    <Bolts cx={752} y={597.500} four />
    <Bolts cx={1082} y={597.500} four />
    <Bolts cx={917} y={740.500} four />
    <path d="M887.500 488.500h59v61h-59z" fill="none" stroke="#4a94f2" />
    <path d="M946.500 488v62" stroke="#0a8cf5" />
    <path d="M916.500 482v37.500H946" fill="none" stroke="#f08a90" />
    <path d="M879 519.500h37.500V549" fill="none" stroke="#86ee4c" />
    <g strokeWidth=".8">
      <path d="M398.500 779v-33h4v33z" fill="#d97880" stroke="#a04048" />
      <path d="M400.500 731l-4.500 16h9z" fill="#d8606a" stroke="#b04850" />
      <path d="M394 784.500h-34v3h34z" fill="#8ed096" stroke="#4c9c54" />
      <path d="M346 786l15-4v8z" fill="#5fb468" stroke="#3f8a48" />
      <circle cx="400.500" cy="786" r="6" fill="#5a7894" stroke="#d8d860" strokeWidth="2.200" />
      <circle cx="400.500" cy="786" r="7.200" fill="none" stroke="#666a30" />
      <path d="M398 783.500h5l-5 5h5" fill="none" stroke="#2050c0" strokeWidth="1.200" />
    </g>
    <text x="400.500" y="727.500" textAnchor="middle" fill="#e04048" fontFamily="Liberation Sans" fontSize="13">X</text>
    <text x="337" y="791" textAnchor="middle" fill="#38a838" fontFamily="Liberation Sans" fontSize="12">Y</text>
  </Scene>
);

/* ---------- taskbar ---------- */
const Taskbar = styled.footer`
  height: 40px;
  display: flex;
  align-items: center;
  position: relative;
  background: #121214;
  flex: none;
  overflow: hidden;
`;
const Backdrop = styled.svg`
  position: absolute;
  inset: 0;
`;
const StartSlot = styled.div`
  width: 60px;
  padding-left: 8px;
  z-index: 1;
`;
const TaskButton = styled.div<{ $kind?: "active" | "open" }>`
  width: 58px;
  height: 38px;
  margin: 2px 4px 0 0;
  display: flex;
  align-items: center;
  justify-content: center;
  z-index: 1;
  border: 1px solid ${(p) => (p.$kind === "active" ? "#d8d8d8" : "#8e8e8e")};
  border-radius: 3px;
  background: ${(p) =>
    p.$kind === "active"
      ? "linear-gradient(135deg, #dadada 0, #b0b0b0 40%, #787878 52%, #8e8e90 100%)"
      : p.$kind === "open"
        ? "linear-gradient(135deg, #84868c 0, #50525a 45%, #363a46 55%, #565c6c 100%)"
        : "linear-gradient(135deg, #8a8a8a 0, #4e4e50 42%, #242426 54%, #2c2c30 100%)"};
`;
const Tray = styled.div`
  margin-left: auto;
  height: 38px;
  display: flex;
  align-items: center;
  z-index: 1;
  color: #fff;
`;
const TrayIcon = styled.span<{ $w: number; $lift?: number }>`
  width: ${(p) => p.$w}px;
  display: flex;
  justify-content: center;
  padding-top: 3px;
  margin-top: ${(p) => -(p.$lift || 0)}px;
`;
const Lang = styled.span`
  width: 22px;
  letter-spacing: -0.4px;
  margin-bottom: 5px;
  text-align: center;
`;
const Clock = styled.div`
  width: 78px;
  margin-left: 2px;
  text-align: center;
  line-height: 17px;
  padding-top: 2px;
  letter-spacing: -0.6px;
`;
const ShowDesktop = styled.div`
  width: 14px;
  height: 38px;
  border: 1px solid #6b6b6b;
  background: linear-gradient(135deg, #777 0, #333 48%, #0d0d0d 52%, #1a1a1a);
`;

const Streaks = () => (
  <Backdrop width="1600" height="40" viewBox="0 0 1600 40">
    <defs>
      <filter id="soft" x="-50%" y="-50%" width="200%" height="200%"><feGaussianBlur stdDeviation="2.500" /></filter>
      <filter id="softer" x="-50%" y="-80%" width="200%" height="260%"><feGaussianBlur stdDeviation="8" /></filter>
    </defs>
    <g filter="url(#softer)">
      <path d="M518-5h38l8 50h-36z" fill="#465264" />
      <path d="M306-5h6l12 50h-16z" fill="#39435a" />
      <path d="M600-5h100l25 55H604z" fill="#5e2a32" />
      <path d="M715-5h80l20 55H720z" fill="#1f2532" />
      <path d="M795-5h70l30 55h-80z" fill="#28272a" />
      <path d="M895-5h145l80 55H920z" fill="#98361f" />
      <path d="M1040-5h90l40 55h-90z" fill="#5a2420" />
      <path d="M1130-5h110l30 55h-110z" fill="#301a18" />
    </g>
    <g filter="url(#soft)">
      <path d="M536-5h10l8 50h-12z" fill="#77869a" />
      <path d="M524 18l10-4 2 24h-8z" fill="#66748a" />
      <path d="M589-5h17l6 50h-15z" fill="#e6d090" />
      <path d="M636-5h14l14 50h-16z" fill="#a83a44" />
      <path d="M618-5h5l6 50h-5z" fill="#8a3038" />
      <path d="M668-5h10l16 50h-10z" fill="#bd6850" />
      <path d="M689-5h18l18 50h-14z" fill="#f6ecac" />
      <path d="M870-5h9l36 50h-20z" fill="#fbe890" />
      <path d="M888-5h24l44 50h-30z" fill="#38140e" />
      <path d="M914-5h7l40 50h-8z" fill="#b83c24" />
      <path d="M936-5h26l42 50h-28z" fill="#c9823e" />
      <path d="M966-5h40l60 50h-56z" fill="#bc4526" />
      <path d="M996-5h7l52 50h-8z" fill="#dc8248" />
      <path d="M1010-5h8l60 50h-10z" fill="#541c16" />
      <path d="M1026-5h10l58 50h-11z" fill="#dc8a64" />
      <path d="M1042-5h12l60 50h-16z" fill="#a02c26" />
      <path d="M1128 10l8 8 1 8-9-8z" fill="#5c4c4c" />
    </g>
    <path d="M0 .5h1600" stroke="#1b1b1b" />
    <path d="M0 1.500h1600" stroke="#a8aaa8" strokeOpacity=".85" />
    <path d="M0 3h1600" stroke="#fff" strokeOpacity=".12" strokeWidth="2" />
  </Backdrop>
);

const StartOrb = () => (
  <svg width="38" height="38" viewBox="0 0 38 38">
    <defs>
      <radialGradient id="orb" cx=".5" cy=".95" r=".9">
        <stop offset="0" stopColor="#20d8ff" />
        <stop offset=".35" stopColor="#0d70a8" />
        <stop offset=".7" stopColor="#12406c" />
        <stop offset="1" stopColor="#6d93b0" />
      </radialGradient>
    </defs>
    <circle cx="19" cy="20" r="17.500" fill="url(#orb)" stroke="#7fa0b4" />
    <path d="M4 15a16 14 0 0 1 30 0c-8 4-22 4-30 0z" fill="#cfe0ec" fillOpacity=".45" />
    <path d="M12 10q4-2 8 0l-1.800 8q-4-2-8 0z" fill="#e8602c" />
    <path d="M21 10.500q4 2 9-1l-2 8.500q-4 3-8.600 1z" fill="#90c448" />
    <path d="M9.700 20q4-2 8 0l-2 8.500q-3-3-7.700-1z" fill="#5aa4e8" />
    <path d="M18.800 20.500q4 2 8.600-.5l-2 8.500q-4 3-8.600.5z" fill="#fcc838" />
  </svg>
);

const Badge = ({ kind }: { kind: string }) => {
  switch (kind) {
    case "help":
      return <svg width="18" height="18" viewBox="0 0 18 18"><circle cx="9" cy="9" r="7.500" fill="#1430c8" stroke="#b8c0d8" strokeWidth="1.500" /><text x="9" y="13" textAnchor="middle" fill="#fff" fontSize="11" fontWeight="700" fontFamily="Noto Sans">?</text></svg>;
    case "stack":
      return <svg width="12" height="18" viewBox="0 0 12 18" fill="none" stroke="#fff"><path d="M3.500 4V1.500h6v4H8M1.500 3.500h5v4h-5z" /><path d="M3 14h6l-3 3z" fill="#fff" stroke="none" /></svg>;
    case "usb":
      return <svg width="18" height="18" viewBox="0 0 18 18"><path d="M3 1h5v4H3zM1 5h8v7l-2 4H4l-3-4z" fill="#8e8e8e" stroke="#555" strokeWidth=".5" /><circle cx="12" cy="12" r="5" fill="#2ea82c" /><path d="M9.500 12l2 2 3-4.500" fill="none" stroke="#fff" strokeWidth="1.500" /></svg>;
    case "net":
      return <svg width="16" height="16" viewBox="0 0 16 16"><path d="M1 2h14v10H1z" fill="#123a70" stroke="#555" /><path d="M3 10l1-4 3 2 1-4 2 3 3-3v6z" fill="#9fd0f0" /><path d="M6 12h4v2H6z" fill="#aaa" /></svg>;
    case "power":
      return <svg width="16" height="18" viewBox="0 0 16 18"><path d="M6 2v12H3V2zM9 5h5v4l-2 3-3-3zM10 1v4M13 1v4M11.500 12v4H7" fill="#eee" stroke="#eee" strokeWidth="1.200" /><path d="M2 9l7 7M9 9l-7 7" stroke="#e01818" strokeWidth="2.600" /></svg>;
    case "sound":
      return <svg width="18" height="18" viewBox="0 0 18 18"><path d="M2 6h3l5-5v14l-5-4H2z" fill="#eee" /><circle cx="12" cy="12" r="4.500" fill="#fff" stroke="#e02020" strokeWidth="2" /><path d="M9 9l6 6" stroke="#e02020" strokeWidth="2" /></svg>;
    case "dish":
      return <svg width="18" height="18" viewBox="0 0 18 18"><path d="M1 9l7-3 8 3-7 4z" fill="#58c8e0" /><path d="M5 1l6 5M9 13v3M4 16.500h10" stroke="#b8c8c8" strokeWidth="1.500" /><path d="M9 9l7-1v4l-7 2z" fill="#2878a8" /></svg>;
    case "signal":
      return <svg width="16" height="14" viewBox="0 0 16 14" fill="#fff"><path d="M1 10h2v2H1zM4 8h2v4H4zM7 6h2v6H7zM10 4h2v8h-2zM13 1h2v11h-2z" /></svg>;
    default:
      return <svg width="17" height="18" viewBox="0 0 17 18"><path d="M2 1v15M3 2h6l1 1h4v7H3z" fill="#eee" stroke="#eee" /><circle cx="11.500" cy="12" r="5" fill="#d82828" /><path d="M9.500 10l4 4M13.500 10l-4 4" stroke="#fff" strokeWidth="1.600" /></svg>;
  }
};
const tray: [string, number, number][] = [
  ["help", 24, 7], ["stack", 20, 7], ["usb", 24, 0], ["net", 24, 0], ["power", 24, 0], ["sound", 24, 0], ["dish", 24, 0], ["signal", 24, 0], ["flag", 24, 0],
];

const menu: [string, number][] = [
  ["Файл", 41], ["Правка", 52], ["Выделить", 65], ["Вид", 32], ["Эскиз", 43], ["Моделирование", 102], ["Сборка", 53], ["Оформление", 86],
  ["Диагностика", 82], ["Управление", 78], ["Настройка", 71], ["Приложения", 84], ["Окно", 41], ["Справка", 50],
];

export default function App() {
  return (
    <>
      <Global />
      <Window>
        <MenuBar>
          <Logo size={20} />
          <MenuItems>
            {menu.map(([t, w]) => <MenuItem key={t} $w={w}>{t}</MenuItem>)}
          </MenuItems>
          <MenuTools><Icon name="win" /><Icon name="wingear" /></MenuTools>
          <CommandSearch><Icon name="search" size={12} />Поиск по командам (Alt+/)</CommandSearch>
          <WinControls>
            <MinBar />
            <Icon name="restore" size={14} />
            <svg width="11" height="10" viewBox="0 0 11 10" stroke="#222" strokeWidth="2.200"><path d="M1.500 1l8 8M9.500 1l-8 8" /></svg>
          </WinControls>
        </MenuBar>
        <TabStrip>
          <NewTab><svg width="13" height="13" viewBox="0 0 13 13" stroke="#333" strokeWidth="1.400"><path d="M6.500 .5v12M.5 6.500h12" /></svg></NewTab>
          <DocTab>
            <Icon name="asm" size={16} />
            <TabTitle>ПолнаяСборкаКаме...</TabTitle>
            <svg width="9" height="9" viewBox="0 0 9 9" stroke="#fff" strokeWidth="1.800"><path d="M1 1l7 7M8 1L1 8" /></svg>
          </DocTab>
        </TabStrip>
        <Ribbon>
          {groups.map((g, gi) => (
            <Group key={gi} $w={g.w}>
              <Columns>
                {g.cols.map((c, ci) => (
                  <Column key={ci} $w={c.w}>
                    {c.items.map((it) => (
                      <Command key={it.i} $active={it.on} $disabled={it.off}>
                        <IconSlot $more={it.more}><Icon name={it.i} /></IconSlot>
                        {it.t && <Caption $tight={it.tight}>{it.t}</Caption>}
                      </Command>
                    ))}
                  </Column>
                ))}
              </Columns>
              <GroupFooter>
                {g.title ? (
                  <>
                    <GroupTitle>{g.title}</GroupTitle>
                    {g.caret && <Caret $w={15} />}
                    <Grip />
                  </>
                ) : (
                  <GroupTitle>
                    <svg width="8" height="8" viewBox="0 0 8 8" fill="none" stroke="#333"><path d="M.5 .5L4 3l3.500-2.500M.5 4L4 6.500 7.500 4" /></svg>
                  </GroupTitle>
                )}
              </GroupFooter>
            </Group>
          ))}
        </Ribbon>
        <Work>
          <SideStrip>
            <SideButton $on><Icon name="treeA" size={15} /></SideButton>
            <SideButton><Icon name="paramlist" /></SideButton>
            <SideButton><Fx>f<sub>x</sub></Fx></SideButton>
            <SideButton><Icon name="bars" size={15} /></SideButton>
          </SideStrip>
          <TreePanel>
            <PanelTitle>Дерево: структура<Icon name="gear" size={12} /></PanelTitle>
            <PanelTools>
              <PanelTool><Icon name="numtree" /></PanelTool>
              <PanelTool $on><Icon name="typetree" size={15} /></PanelTool>
              <PanelTool><Icon name="twodocs" /></PanelTool>
              <PanelTool><Icon name="dashed" /></PanelTool>
              <PanelTool $line><Icon name="checktree" /></PanelTool>
              <Caret />
            </PanelTools>
            <FilterRow>
              <PanelTool><Icon name="funnel" /></PanelTool>
              <PanelTool><Icon name="search" size={12} color="#aaa" /></PanelTool>
            </FilterRow>
            <TreeList>
              <div>
                {nodes.map((n) => (
                  <Row key={n.t} $hidden={n.hidden}>
                    <RowFlags><Icon name={n.hidden ? "eyeoff" : "eye"} /><Icon name="elem" /></RowFlags>
                    <Alert $on={n.alert}>{n.alert ? "!" : ""}</Alert>
                    <Expander />
                    <RowIcons>
                      <Icon name={n.icon} />
                      {n.std && <Icon name="std" size={13} />}
                      {n.pin && <Icon name="fixpin" size={12} />}
                    </RowIcons>
                    {!n.pin && <Minus>(–)</Minus>}
                    <RowText $tight={n.tight}>{n.t}</RowText>
                  </Row>
                ))}
              </div>
              <Scroll />
            </TreeList>
          </TreePanel>
          <Viewport>
            <Model />
            <ViewBar>
              <BarGrip />
              <ViewSep />
              <ViewCell $w={27}><Icon name="sketch" /></ViewCell>
              <ViewCell $w={28}><Icon name="sketch3d" /></ViewCell>
              <ViewSep />
              <ViewCell $w={27}><Icon name="zoomarea" /></ViewCell>
              <ViewCell $w={22}><Caret /></ViewCell>
              <ViewCell $w={26}><Icon name="normal" /></ViewCell>
              <ViewCell $w={27}><Icon name="axes" /></ViewCell>
              <ViewCell $w={21}><Caret /></ViewCell>
              <ViewSep $gap={1} />
              <ViewCell $w={26} $on><Icon name="shaded" /></ViewCell>
              <ViewCell $w={28}><Icon name="wire" /></ViewCell>
              <ViewCell $w={21}><Caret /></ViewCell>
              <ViewSep />
              <ViewCell $w={28}><Icon name="eyeoff" /></ViewCell>
              <ViewCell $w={20}><Caret /></ViewCell>
              <ViewCell $w={28}><Icon name="eyebox" /></ViewCell>
              <ViewCell $w={21}><Caret /></ViewCell>
              <ViewSep $gap={1} />
              <ViewCell $w={26} $on><Icon name="snaps" /></ViewCell>
              <ViewCell $w={28}><Icon name="dims3" /></ViewCell>
              <ViewCell $w={26} $on><Icon name="cubes" /></ViewCell>
              <ViewCell $w={28}><Icon name="section3" /></ViewCell>
              <ViewSep $gap={1} />
              <ViewCell $w={27} $on><Icon name="funnel" /></ViewCell>
              <ViewCell $w={20} $on><Caret $light /></ViewCell>
              <ViewSep />
              <ViewCell $w={29}><Icon name="crane" /></ViewCell>
              <ViewCell $w={27} $off><Icon name="picker" /></ViewCell>
            </ViewBar>
          </Viewport>
        </Work>
        <Taskbar>
          <Streaks />
          <StartSlot><StartOrb /></StartSlot>
          <TaskButton>
            <svg width="30" height="30" viewBox="0 0 30 30"><circle cx="15" cy="15" r="15" fill="#f4f4f4" /><path d="M7.500 8.500l7.500 8 7.500-8M15 16v9.500" fill="none" stroke="#d80c14" strokeWidth="3.600" /></svg>
          </TaskButton>
          <TaskButton>
            <svg width="34" height="32" viewBox="0 0 34 32">
              <path d="M2 4h12l2 3h16v21H2z" fill="#f2d878" stroke="#b89840" />
              <path d="M4 2h9v4H4z" fill="#fff" /><path d="M5 2h4v2H5z" fill="#20b040" />
              <path d="M13 4h9v4h-9z" fill="#fff" /><path d="M14 4h3v2h-3z" fill="#e04030" />
              <path d="M20 6h10v4H20z" fill="#fff" /><path d="M23 6h4v2h-4z" fill="#2890d8" />
              <path d="M2 9h30v19H2z" fill="#f5e08c" />
              <path d="M6 30V18h23v12h-6v-6H12v6z" fill="#8cc8e8" stroke="#5aa0c8" />
              <path d="M10 12v10M5 17h10" stroke="#fff" />
            </svg>
          </TaskButton>
          <TaskButton $kind="active"><Logo size={32} /></TaskButton>
          <TaskButton $kind="open">
            <svg width="32" height="32" viewBox="0 0 32 32">
              <path d="M1 20C1 11 8 7 16 7s13 5 13 11-7 13-14 11c-3-1-1-5-4-6-3 0-2 5-6 4-3-1-4-4-4-7z" fill="#c4e2f4" stroke="#80b0cc" />
              <circle cx="6" cy="18" r="2.700" fill="#e04030" /><circle cx="11" cy="13" r="2.700" fill="#4cb03c" /><circle cx="18" cy="10.500" r="2.700" fill="#f0b020" /><circle cx="14" cy="20" r="2.500" fill="#305878" />
              <path d="M27 7L17 31" stroke="#e88828" strokeWidth="3" /><path d="M24 7l2-6 6 3-4 6z" fill="#c89868" />
            </svg>
          </TaskButton>
          <Tray>
            <Lang>RU</Lang>
            {tray.map(([k, w, lift]) => <TrayIcon key={k} $w={w} $lift={lift}><Badge kind={k} /></TrayIcon>)}
            <Clock>8:48<br />16.07.2021</Clock>
            <ShowDesktop />
          </Tray>
        </Taskbar>
      </Window>
    </>
  );
}
